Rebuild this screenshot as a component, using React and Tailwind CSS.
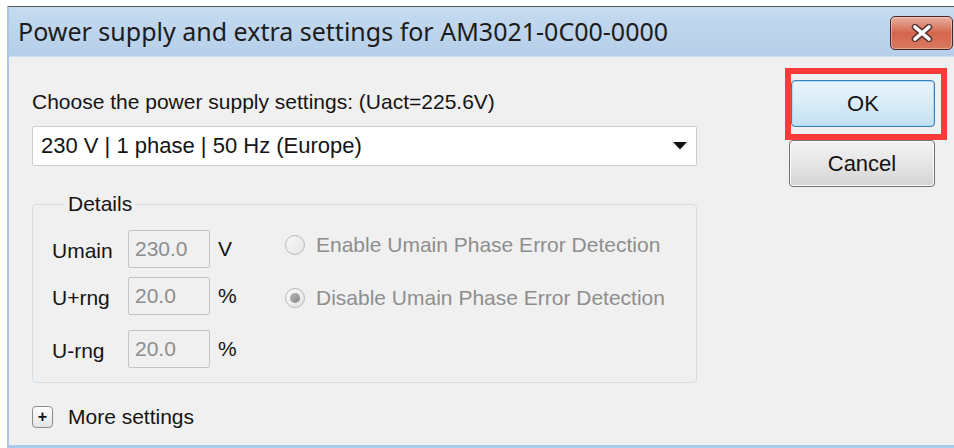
import clsx from 'clsx';

const CloseGlyph = () => (
  <svg width="24" height="18" viewBox="0 0 24 18">
    <path d="M5 3 L19 15 M19 3 L5 15" stroke="#5b3434" strokeWidth="6.5" strokeLinecap="round" />
    <path d="M5 3 L19 15 M19 3 L5 15" stroke="#ffffff" strokeWidth="3.6" strokeLinecap="round" />
  </svg>
);

const TitleBar = () => (
  <div className="flex items-center justify-between h-[50px] bg-gradient-to-b from-[#c6dbf0] via-[#bdd4ec] to-[#b6cfe9] border-b border-[#cfdeee]">
    <span className="pl-[9px] text-[25px] text-[#1c1c1c] font-['Noto_Sans',sans-serif] leading-none">
      Power supply and extra settings for AM3021-0C00-0000
    </span>
    <button className="mr-[1px] mt-[3px] flex items-center justify-center w-[63px] h-[34px] rounded-[5px] border border-[#4a2424] bg-gradient-to-b from-[#e8ae9f] via-[#d4664d] via-50% to-[#d77a60] shadow-[inset_0_0_0_1px_rgba(255,255,255,0.35)]">
      <CloseGlyph />
    </button>
  </div>
);

const Radio = ({ label, checked }) => (
  <div className="flex items-center h-[24px]">
    <span className="flex items-center justify-center w-[20px] h-[20px] rounded-full border border-[#b9b9b9] bg-gradient-to-br from-[#fafafa] to-[#e2e2e2]">
      {checked && (
        <span className="w-[10px] h-[10px] rounded-full bg-gradient-to-br from-[#b8b8b8] to-[#858585]" />
      )}
    </span>
    <span className="ml-[11px] text-[#8e8e8e]">{label}</span>
  </div>
);

const ValueRow = ({ label, value, unit, className }) => (
  <div className={clsx('flex items-center', className)}>
    <span className="w-[76px] pt-[3px]">{label}</span>
    <div className="w-[82px] h-[38px] flex items-center pl-[6px] border border-[#c4c4c4] rounded-[2px] text-[#8d8d8d]">
      {value}
    </div>
    <span className="ml-[8px]">{unit}</span>
  </div>
);

const Details = () => (
  <fieldset className="mt-[26px] border border-[#d3dde6] rounded-[4px] pl-[19px] pb-[14px]">
    <legend className="ml-[13px] px-[3px] leading-[24px]">Details</legend>
    <div className="flex">
      <div className="w-[233px] flex flex-col">
        <ValueRow label="Umain" value="230.0" unit="V" className="mt-[14px]" />
        <ValueRow label="U+rng" value="20.0" unit="%" className="mt-[9px]" />
        <ValueRow label="U-rng" value="20.0" unit="%" className="mt-[15px]" />
      </div>
      <div className="flex flex-col">
        <div className="mt-[17px]">
          <Radio label="Enable Umain Phase Error Detection" />
        </div>
        <div className="mt-[29px]">
          <Radio label="Disable Umain Phase Error Detection" checked />
        </div>
      </div>
    </div>
  </fieldset>
);

const App = () => {
  return (
    <div className="w-[954px] h-[448px] overflow-hidden bg-white pl-[7px] pt-[6px] font-['Liberation_Sans',sans-serif] text-[21px] leading-[24px] text-[#141414]">
      <div className="h-[442px] flex flex-col border-t border-t-[#5a5a5a] border-l-2 border-l-[#a8c7e6] border-b-[3px] border-b-[#a9cbe9]">
        <TitleBar />

        <div className="flex-1 flex bg-[#f0f0f0]">
          <div className="w-[688px] pl-[23px] flex flex-col">
            <p className="pt-[33px] leading-[24px]">Choose the power supply settings: (Uact=225.6V)</p>

            <div className="mt-[12px] h-[40px] flex items-center justify-between pl-[8px] pr-[8px] bg-white border border-[#cdcdcd] rounded-[2px]">
              <span className="text-[22px]">230 V | 1 phase | 50 Hz (Europe)</span>
              <svg width="14" height="8" viewBox="0 0 14 8" className="mr-[1px]">
                <path d="M0 0 H14 L7 7.5 Z" fill="#111" />
              </svg>
            </div>

            <Details />

            <div className="mt-[22px] flex items-center">
              <span className="flex items-center justify-center w-[21px] h-[22px] rounded-[4px] border border-[#8b8b8b] bg-gradient-to-b from-white to-[#e4e4e4] text-[16px] leading-none font-bold">
                +
              </span>
              <span className="ml-[15px]">More settings</span>
            </div>
          </div>

          <div className="ml-[88px] pt-[11px] flex flex-col">
            <div className="w-[162px] border-[6px] border-[#fb3a3a] pt-[6px] pr-[6px] pb-[7px]">
              <button className="w-[144px] h-[47px] rounded-[4px] border border-[#3d7fb3] bg-gradient-to-b from-[#eaf5fc] via-[#d9ecf8] via-50% to-[#c2dff1] shadow-[inset_0_0_0_1px_#a9dcf7] text-[22px]">
                OK
              </button>
            </div>
            <button className="ml-[4px] w-[146px] h-[47px] rounded-[4px] border border-[#727272] bg-gradient-to-b from-[#f3f3f3] via-[#e6e6e6] via-50% to-[#d3d3d3] shadow-[inset_0_0_0_1px_#fbfbfb] text-[22px]">
              Cancel
            </button>
          </div>
        </div>
      </div>
    </div>
  );
};

export default App;
